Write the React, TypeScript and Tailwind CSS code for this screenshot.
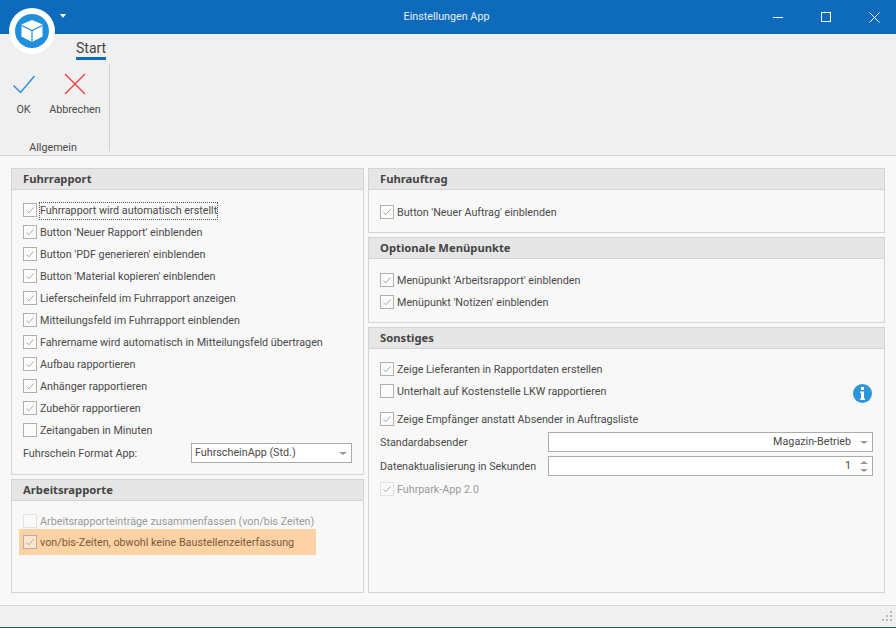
function Check({ on, muted }: { on?: boolean; muted?: boolean }) {
  return (
    <span className={`flex h-[14px] w-[14px] shrink-0 items-center justify-center border ${muted ? 'border-[#e2e2e2] bg-[#fafafa]' : 'border-[#b0b0b0] bg-white/40'}`}>
      {on && (
        <svg width="12" height="12" viewBox="0 0 12 12" fill="none">
          <path d="M2.5 6.5l2.2 2.3L9.5 3.5" stroke="#a8a8a8" strokeWidth="1" />
        </svg>
      )}
    </span>
  )
}

function Row({ label, on, muted, focus }: { label: string; on?: boolean; muted?: boolean; focus?: boolean }) {
  return (
    <div className="flex h-[22px] items-center gap-[3px]">
      <Check on={on} muted={muted} />
      <span className={`${muted ? 'text-[#9a9a9a]' : 'text-[#4a4a4a]'} ${focus ? 'outline-1 outline-dotted outline-[#555]' : ''} mt-[2px] whitespace-nowrap`}>{label}</span>
    </div>
  )
}

function Panel({ title, className, children }: { title: string; className: string; children: React.ReactNode }) {
  return (
    <section className={`flex flex-col border border-[#d4d4d4] ${className}`}>
      <h2 className="flex h-[21px] shrink-0 items-center border-b border-[#d4d4d4] bg-[#e6e6e6] pl-[11px] font-['Noto_Sans',sans-serif] text-[11.25px] font-bold text-[#444]">{title}</h2>
      {children}
    </section>
  )
}

function Arrow() {
  return <span className="block h-0 w-0 border-x-[4px] border-t-[3px] border-x-transparent border-t-[#999]" />
}

const fuhrrapport = [
  ["Button 'Neuer Rapport' einblenden", true],
  ["Button 'PDF generieren' einblenden", true],
  ["Button 'Material kopieren' einblenden", true],
  ['Lieferscheinfeld im Fuhrrapport anzeigen', true],
  ['Mitteilungsfeld im Fuhrrapport einblenden', true],
  ['Fahrername wird automatisch in Mitteilungsfeld übertragen', true],
  ['Aufbau rapportieren', true],
  ['Anhänger rapportieren', true],
  ['Zubehör rapportieren', true],
  ['Zeitangaben in Minuten', false],
] as const

export default function App() {
  return (
    <div className="relative flex h-[628px] w-[896px] flex-col overflow-hidden bg-[#f8f8f8] font-['Roboto',sans-serif] text-[10.75px] text-[#4a4a4a]">
      {/* Titelleiste */}
      <header className="flex h-[34px] shrink-0 items-center bg-[#0e6abb] text-white">
        <span className="ml-[60px] mt-[-3px] h-0 w-0 border-x-[3.5px] border-t-[4px] border-x-transparent border-t-white" />
        <span className="ml-[73px] flex-1 text-center text-[#e8f0f8]">Einstellungen App</span>
        <div className="-mr-[2px] flex items-center">
          <span className="flex w-[48px] justify-center"><span className="h-px w-[10px] bg-white" /></span>
          <span className="flex w-[48px] justify-center"><span className="h-[10px] w-[10px] border border-white" /></span>
          <span className="flex w-[48px] justify-center">
            <svg width="11" height="11" viewBox="0 0 11 11" stroke="#fff" strokeWidth="1">
              <path d="M.5.5l10 10M10.5.5l-10 10" />
            </svg>
          </span>
        </div>
      </header>

      {/* Logo */}
      <div className="absolute left-[9px] top-[8px] flex h-[46px] w-[46px] items-center justify-center rounded-full bg-white">
        <div className="flex h-[34px] w-[34px] items-center justify-center rounded-full bg-[#1f8fdc]">
          <svg width="24" height="24" viewBox="0 0 24 24">
            <path d="M12 1L22.5 5.5V17.5L12 23 1.5 17.5V5.5z" fill="#fff" />
            <path d="M1.5 6.5L12 11.5 22.5 6.5M12 11.5V23" fill="none" stroke="#1f8fdc" strokeWidth="1.2" />
          </svg>
        </div>
      </div>

      {/* Ribbon */}
      <div className="flex h-[122px] shrink-0 flex-col border-b border-[#d6d6d6] bg-[#f0f0f0]">
        <div className="ml-[76px] mt-[6px] w-[30px] border-b-[3px] border-[#0e6abb] text-center text-[14px] leading-[17px] text-[#444]">Start</div>
        <div className="mt-[4px] flex">
          <div className="flex h-[87px] w-[110px] flex-col border-r border-[#d0d0d0]">
            <div className="flex">
              <button className="flex w-[47px] flex-col items-center">
                <svg className="mt-[8px]" width="24" height="24" viewBox="0 0 24 24" fill="none">
                  <path d="M1.5 13.5l7 7L22.5 4" stroke="#2b8fd8" strokeWidth="1.5" />
                </svg>
                <span className="mt-[7px] leading-[14px]">OK</span>
              </button>
              <button className="flex w-[56px] flex-col items-center">
                <svg className="mt-[8px]" width="24" height="24" viewBox="0 0 24 24" fill="none">
                  <path d="M2 2l20 20M22 2L2 22" stroke="#ea4a4a" strokeWidth="1.5" />
                </svg>
                <span className="mt-[7px] leading-[14px]">Abbrechen</span>
              </button>
            </div>
            <span className="-mb-[4px] mt-auto w-[106px] text-center leading-[14px]">Allgemein</span>
          </div>
        </div>
      </div>

      {/* Inhalt */}
      <main className="flex min-h-0 flex-1 gap-[4px] pb-[12px] pl-[11px] pr-[11px] pt-[12px]">
        <div className="flex w-[353px] flex-col gap-[4px]">
          <Panel title="Fuhrrapport" className="h-[307px]">
            <div className="flex flex-col px-[11px] pt-[9px]">
              <Row label="Fuhrrapport wird automatisch erstellt" on focus />
              {fuhrrapport.map(([label, on]) => <Row key={label} label={label} on={on} />)}
              <div className="mt-[2px] flex h-[20px] items-center justify-between">
                <span className="mt-[2px]">Fuhrschein Format App:</span>
                <div className="flex h-[20px] w-[161px] items-center justify-between border border-[#ababab] bg-white pl-[3px] pr-[4px]">
                  <span>FuhrscheinApp (Std.)</span>
                  <Arrow />
                </div>
              </div>
            </div>
          </Panel>
          <Panel title="Arbeitsrapporte" className="flex-1">
            <div className="flex flex-col px-[7px] pt-[9px]">
              <div className="pl-[4px]"><Row label="Arbeitsrapporteinträge zusammenfassen (von/bis Zeiten)" muted /></div>
              <div className="-mt-[3px] flex h-[26px] w-[297px] items-center gap-[3px] bg-[#fdd2a4] pl-[4px]">
                <Check on />
                <span className="mt-[3px] whitespace-nowrap text-[#7a5a3a]">von/bis-Zeiten, obwohl keine Baustellenzeiterfassung</span>
              </div>
            </div>
          </Panel>
        </div>

        <div className="flex flex-1 flex-col gap-[4px]">
          <Panel title="Fuhrauftrag" className="h-[65px]">
            <div className="pl-[11px] pt-[11px]"><Row label="Button 'Neuer Auftrag' einblenden" on /></div>
          </Panel>
          <Panel title="Optionale Menüpunkte" className="h-[86px]">
            <div className="pl-[11px] pt-[10px]">
              <Row label="Menüpunkt 'Arbeitsrapport' einblenden" on />
              <Row label="Menüpunkt 'Notizen' einblenden" on />
            </div>
          </Panel>
          <Panel title="Sonstiges" className="flex-1">
            <div className="flex flex-col px-[11px] pt-[9px]">
              <Row label="Zeige Lieferanten in Rapportdaten erstellen" on />
              <div className="flex h-[22px] items-center justify-between">
                <Row label="Unterhalt auf Kostenstelle LKW rapportieren" />
                <span className="mr-px mt-[4px] flex h-[19px] w-[19px] items-center justify-center rounded-full bg-[#2b96dc]">
                  <svg width="5" height="13" viewBox="0 0 5 13" fill="#fff">
                    <rect x="1" y="0" width="3" height="3" />
                    <path d="M0 4.5h4v7h1V13H0v-1.5h1V6H0z" />
                  </svg>
                </span>
              </div>
              <div className="mt-[6px]"><Row label="Zeige Empfänger anstatt Absender in Auftragsliste" on /></div>
              <div className="mt-[2px] flex h-[20px] items-center justify-between">
                <span className="mt-[2px] whitespace-nowrap">Standardabsender</span>
                <div className="flex h-[20px] w-[325px] shrink-0 items-center justify-end gap-[9px] border border-[#ababab] bg-white pr-[4px]">
                  <span>Magazin-Betrieb</span>
                  <Arrow />
                </div>
              </div>
              <div className="mt-[4px] flex h-[20px] items-center justify-between">
                <span className="mt-[2px] whitespace-nowrap">Datenaktualisierung in Sekunden</span>
                <div className="flex h-[20px] w-[325px] shrink-0 items-center justify-end gap-[9px] border border-[#ababab] bg-white pr-[4px]">
                  <span>1</span>
                  <span className="flex flex-col gap-[5px]">
                    <span className="block h-0 w-0 border-x-[4px] border-b-[3px] border-x-transparent border-b-[#999]" />
                    <Arrow />
                  </span>
                </div>
              </div>
              <div className="mt-[2px]"><Row label="Fuhrpark-App 2.0" on muted /></div>
            </div>
          </Panel>
        </div>
      </main>

      {/* Statusleiste */}
      <footer className="flex h-[23px] shrink-0 items-center justify-end border-b border-t border-b-[#0e5a9c] border-t-[#d6d6d6] bg-[#f0f0f0] pr-[3px]">
        <svg width="11" height="11" viewBox="0 0 11 11" fill="#b5b5b5">
          <rect x="8" y="0" width="2" height="2" />
          <rect x="4" y="4" width="2" height="2" />
          <rect x="8" y="4" width="2" height="2" />
          <rect x="0" y="8" width="2" height="2" />
          <rect x="4" y="8" width="2" height="2" />
          <rect x="8" y="8" width="2" height="2" />
        </svg>
      </footer>
    </div>
  )
}
